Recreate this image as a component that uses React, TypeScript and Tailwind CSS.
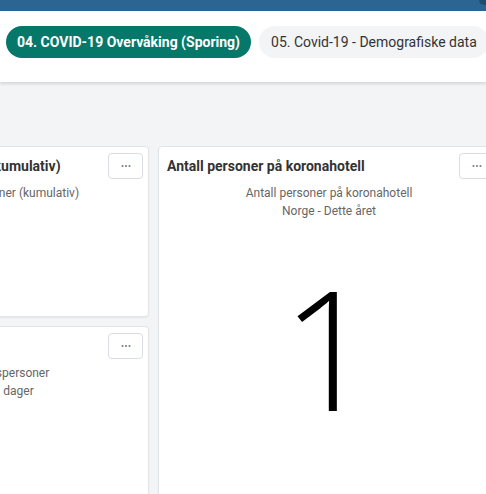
import React from "react";

function Dots() {
  return (
    <button className="w-[35px] h-[26px] shrink-0 border border-[#d9dde3] rounded-[4px] bg-white flex items-center justify-center">
      <svg width="10" height="4" viewBox="0 0 10 4">
        <circle cx="1.5" cy="2" r="1.1" fill="#7b8190" />
        <circle cx="5" cy="2" r="1.1" fill="#7b8190" />
        <circle cx="8.5" cy="2" r="1.1" fill="#7b8190" />
      </svg>
    </button>
  );
}

function CardHeader({ title }: { title: string }) {
  return (
    <div className="flex items-center justify-between pt-[6px] pl-[8px] pr-[5px]">
      <div className="text-[14px] font-bold text-[#333] whitespace-nowrap">{title}</div>
      <Dots />
    </div>
  );
}

export default function App() {
  return (
    <div className="w-[486px] h-[494px] overflow-hidden bg-[#f3f4f6] font-['Roboto',sans-serif] relative">
      <div className="h-[11px] bg-[#2c6591] flex justify-end">
        <div className="w-[7px] h-[5px] bg-[#1f4d70] rounded-bl-[5px]" />
      </div>
      <div className="h-[71px] bg-white shadow-[0_2px_3px_rgba(0,0,0,0.12)] relative z-10 flex items-start gap-2 pl-[6px] pt-[15px]">
        <div className="shrink-0 h-[32px] px-[11px] rounded-full bg-[#057869] text-white text-[14px] font-bold flex items-center whitespace-nowrap">
          04. COVID-19 Overvåking (Sporing)
        </div>
        <div className="shrink-0 h-[32px] px-[12px] rounded-full bg-[#f3f4f6] text-[#333] text-[14px] flex items-center whitespace-nowrap">
          05. Covid-19 - Demografiske data
        </div>
      </div>
      <div className="pt-[64px] flex gap-[9px] ml-[-193px]">
        <div className="w-[342px] shrink-0 flex flex-col gap-[9px]">
          <div className="h-[171px] bg-white border border-[#e1e4e8] rounded-[4px] shadow-[0_1px_2px_rgba(0,0,0,0.06)]">
            <CardHeader title="Antall registrerte pasienter (kumulativ)" />
            <div className="mt-[5px] text-center text-[12px] leading-[18px] text-[#666]">
              Antall registrerte personer (kumulativ)
            </div>
          </div>
          <div className="h-[300px] bg-white border border-[#e1e4e8] rounded-[4px] shadow-[0_1px_2px_rgba(0,0,0,0.06)]">
            <CardHeader title="Smittespersoner" />
            <div className="mt-[5px] text-center text-[12px] leading-[18px] text-[#666]">
              <div>Antall nye smittespersoner</div>
              <div>Norge - Siste 7 dager</div>
            </div>
          </div>
        </div>
        <div className="w-[342px] h-[400px] shrink-0 bg-white border border-[#e1e4e8] rounded-[4px] shadow-[0_1px_2px_rgba(0,0,0,0.06)]">
          <CardHeader title="Antall personer på koronahotell" />
          <div className="mt-[5px] text-center text-[12px] leading-[18px] text-[#666]">
            <div>Antall personer på koronahotell</div>
            <div>Norge - Dette året</div>
          </div>
          <div className="mt-[43px] text-center text-[167px] leading-none font-light text-black font-['Open_Sans',sans-serif]">
            1
          </div>
        </div>
      </div>
    </div>
  );
}
